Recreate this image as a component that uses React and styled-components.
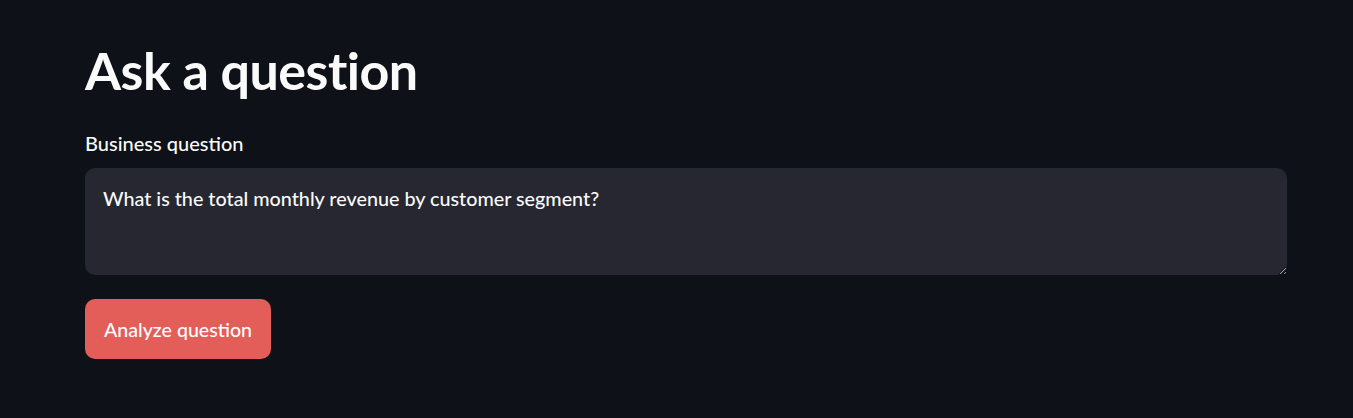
import React from "react";
import styled, { createGlobalStyle } from "styled-components";

const GlobalStyle = createGlobalStyle`
  html, body {
    margin: 0;
    padding: 0;
    background: #0e1117;
    font-family: Lato, "Open Sans", sans-serif;
    color: #fafafa;
  }
`;

const Page = styled.main`
  box-sizing: border-box;
  width: 100%;
  min-height: 418px;
  padding: 36px 66px 40px 85px;
  display: flex;
  flex-direction: column;
`;

const Title = styled.h1`
  margin: 0;
  font-size: 52px;
  font-weight: 700;
  line-height: 68px;
  letter-spacing: -0.5px;
  color: #fafafa;
`;

const Field = styled.label`
  display: flex;
  flex-direction: column;
  margin-top: 25px;
`;

const Label = styled.span`
  font-size: 20px;
  line-height: 28px;
  font-weight: 500;
  color: #fafafa;
  margin-bottom: 11px;
`;

const TextArea = styled.textarea`
  box-sizing: border-box;
  width: 100%;
  height: 107px;
  resize: vertical;
  border: none;
  outline: none;
  border-radius: 10px;
  background: #262730;
  color: #fafafa;
  font-family: inherit;
  font-size: 19.75px;
  font-weight: 500;
  line-height: 28px;
  padding: 17px 18px;
`;

const Button = styled.button`
  align-self: flex-start;
  margin-top: 24px;
  height: 60px;
  width: 186px;
  padding: 0;
  border: none;
  border-radius: 10px;
  background: #e35d59;
  color: #fff;
  font-family: inherit;
  font-size: 19.6px;
  font-weight: 500;
  cursor: pointer;
`;

export default function App() {
  return (
    <>
      <GlobalStyle />
      <Page>
        <Title>Ask a question</Title>
        <Field>
          <Label>Business question</Label>
          <TextArea defaultValue="What is the total monthly revenue by customer segment?" />
        </Field>
        <Button>Analyze question</Button>
      </Page>
    </>
  );
}
